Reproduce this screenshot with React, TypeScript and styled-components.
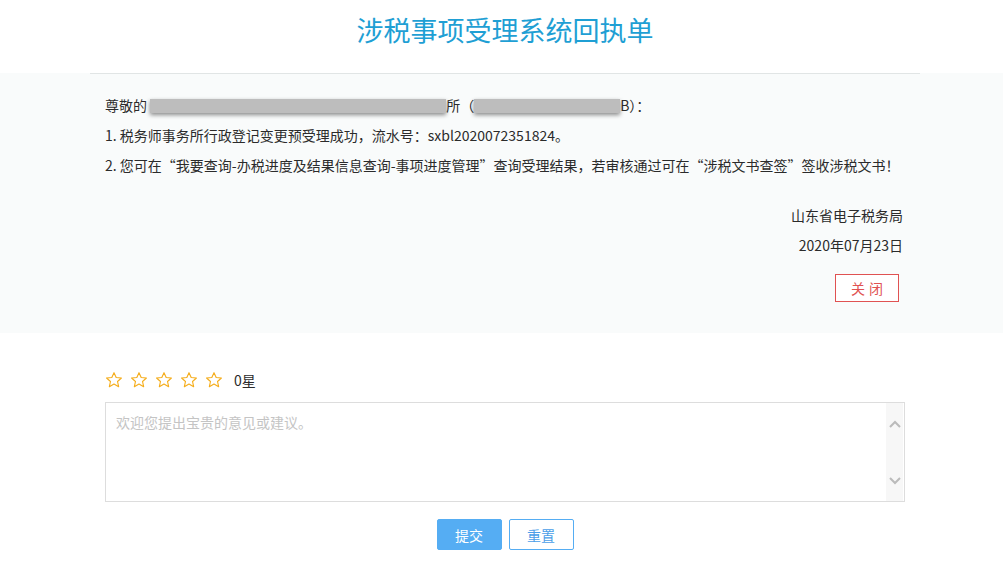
import styled, { createGlobalStyle } from "styled-components";

const GlobalStyle = createGlobalStyle`
  html, body {
    margin: 0;
    padding: 0;
    background: #ffffff;
    font-family: "Noto Sans CJK SC", "Noto Sans", sans-serif;
    color: #333333;
  }
`;

const Page = styled.div`
  min-height: 570px;
  padding-left: 7px;
`;

const Header = styled.div`
  height: 73px;
  display: flex;
  justify-content: center;
  align-items: flex-start;
`;

const Title = styled.h1`
  margin: 11px 0 0;
  font-size: 27px;
  font-weight: 400;
  line-height: 38px;
  color: #1f9fd4;
  font-family: "Noto Sans CJK SC", sans-serif;
`;

const Receipt = styled.div`
  background: #f9fbfb;
  margin-left: -7px;
  padding-left: 7px;
`;

const Container = styled.div`
  width: 830px;
  margin: 0 auto;
  box-sizing: border-box;
`;

const ReceiptInner = styled(Container)`
  border-top: 1px solid #e1e5e5;
  padding: 16px 17px 31px 15px;
  font-size: 14px;
  line-height: 30px;
  color: #2b2b2b;
`;

const Line = styled.div`
  white-space: nowrap;
`;

const Masked = styled.span<{ $w: number }>`
  display: inline-block;
  width: ${(p) => p.$w}px;
  height: 14px;
  vertical-align: -2px;
  background: #bdbdbd;
  box-shadow: 0 2px 4px rgba(0, 0, 0, 0.45);
`;

const Signature = styled.div`
  margin-top: 20px;
  display: flex;
  flex-direction: column;
  align-items: flex-end;
`;

const CloseButton = styled.button`
  margin: 14px 4px 0 0;
  width: 64px;
  height: 28px;
  border: 1px solid #e05252;
  background: #ffffff;
  color: #e05252;
  font-size: 14px;
  font-family: "Noto Sans CJK SC", sans-serif;
  letter-spacing: 4px;
  padding: 0 0 0 4px;
  cursor: pointer;
`;

const Feedback = styled(Container)`
  padding: 38px 15px 0;
`;

const StarRow = styled.div`
  display: flex;
  align-items: center;
  gap: 7px;
  height: 18px;
`;

const Star = styled.svg`
  width: 18px;
  height: 18px;
  display: block;
`;

const StarCount = styled.span`
  margin-left: 4px;
  font-size: 14px;
  color: #2b2b2b;
`;

const TextBox = styled.div`
  margin-top: 13px;
  height: 100px;
  border: 1px solid #dddddd;
  box-sizing: border-box;
  display: flex;
  background: #fff;
`;

const Input = styled.textarea`
  flex: 1;
  border: none;
  outline: none;
  resize: none;
  padding: 9px 10px;
  font-size: 14px;
  line-height: 20px;
  font-family: "Noto Sans CJK SC", "Noto Sans", sans-serif;
  color: #333;
  background: transparent;
  &::placeholder {
    color: #c4c4c4;
  }
`;

const ScrollBar = styled.div`
  width: 17px;
  margin-right: 1px;
  background: #f7f7f7;
  display: flex;
  flex-direction: column;
  justify-content: space-between;
  align-items: center;
  padding: 17px 0 16px;
`;

const Arrow = styled.svg`
  width: 12px;
  height: 8px;
  display: block;
`;

const Actions = styled.div`
  margin-top: 17px;
  display: flex;
  justify-content: center;
  gap: 7px;
`;

const Button = styled.button<{ $primary?: boolean }>`
  width: 65px;
  height: 31px;
  border-radius: 2px;
  font-size: 14px;
  font-family: "Noto Sans CJK SC", sans-serif;
  cursor: pointer;
  border: 1px solid #55adf3;
  background: ${(p) => (p.$primary ? "#55adf3" : "#ffffff")};
  color: ${(p) => (p.$primary ? "#ffffff" : "#4a9ee8")};
`;

const StarIcon = () => (
  <Star viewBox="0 0 24 24">
    <path
      d="M12 2.2l2.9 6.4 7 .7-5.2 4.7 1.5 6.9L12 17.3l-6.2 3.6 1.5-6.9L2.1 9.3l7-.7z"
      fill="none"
      stroke="#f5ad1c"
      strokeWidth="1.5"
      strokeLinejoin="round"
    />
  </Star>
);

export default function App() {
  return (
    <Page>
      <GlobalStyle />
      <Header>
        <Title>涉税事项受理系统回执单</Title>
      </Header>
      <Receipt>
        <ReceiptInner>
          <Line>
            尊敬的 <Masked $w={296} />
            所（<Masked $w={146} />B）：
          </Line>
          <Line>1. 税务师事务所行政登记变更预受理成功，流水号：sxbl2020072351824。</Line>
          <Line>
            2. 您可在“我要查询-办税进度及结果信息查询-事项进度管理”查询受理结果，若审核通过可在“涉税文书查签”签收涉税文书！
          </Line>
          <Signature>
            <Line>山东省电子税务局</Line>
            <Line>2020年07月23日</Line>
            <CloseButton>关闭</CloseButton>
          </Signature>
        </ReceiptInner>
      </Receipt>
      <Feedback>
        <StarRow>
          {[0, 1, 2, 3, 4].map((i) => (
            <StarIcon key={i} />
          ))}
          <StarCount>0星</StarCount>
        </StarRow>
        <TextBox>
          <Input placeholder="欢迎您提出宝贵的意见或建议。" />
          <ScrollBar>
            <Arrow viewBox="0 0 12 8">
              <path d="M1 7l5-5 5 5" fill="none" stroke="#bbbbbb" strokeWidth="2" />
            </Arrow>
            <Arrow viewBox="0 0 12 8">
              <path d="M1 1l5 5 5-5" fill="none" stroke="#bbbbbb" strokeWidth="2" />
            </Arrow>
          </ScrollBar>
        </TextBox>
        <Actions>
          <Button $primary>提交</Button>
          <Button>重置</Button>
        </Actions>
      </Feedback>
    </Page>
  );
}
